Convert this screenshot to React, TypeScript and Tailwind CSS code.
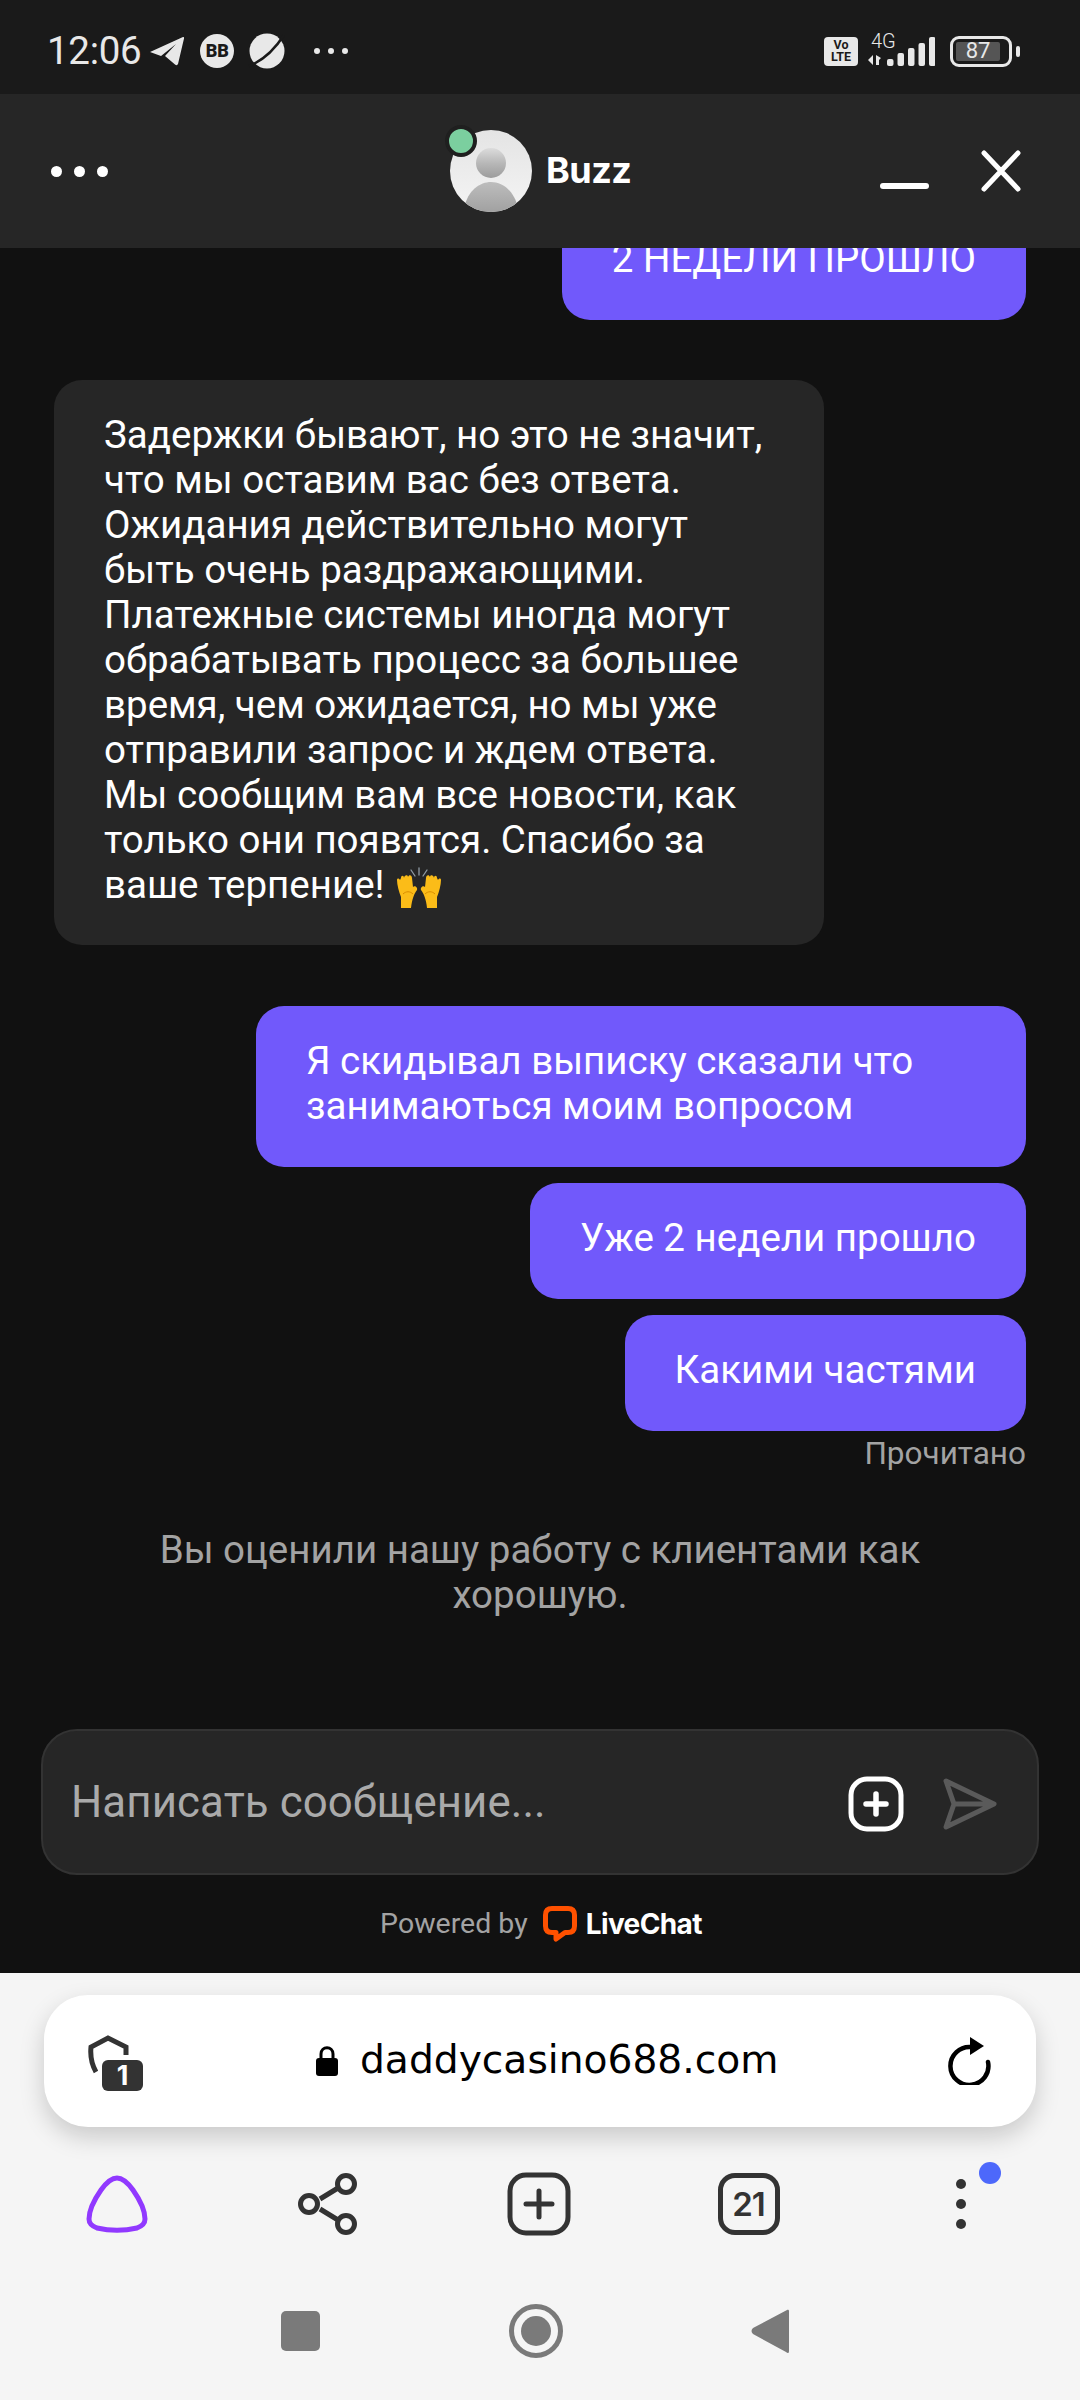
import React from "react";

function Telegram() {
  return (
    <svg width="36" height="30" viewBox="0 0 36 30" className="ml-[8px]">
      <path d="M1 16 L34 1 Q35.500 .5 35 2.500 L29 28 Q28 30 26 28.500 L16 20 L27 8 L12 20 Z" fill="#e8e8e8" />
    </svg>
  );
}

function Planet() {
  return (
    <svg width="38" height="38" viewBox="0 0 38 38">
      <circle cx="19" cy="19" r="17.500" fill="#e8e8e8" />
      <path d="M1 34 C14 29 27 17 36 3" stroke="#1a1a1a" strokeWidth="2.500" fill="none" />
    </svg>
  );
}

function Signal() {
  const bars = [7, 13, 18, 23, 29];
  return (
    <svg width="68" height="32" viewBox="0 0 68 32">
      <path d="M1 25 L6 20 V30 Z M9 20 L14 23 L12 25 V30 H9 Z" fill="#e8e8e8" />
      {bars.map((h, i) => (
        <rect key={i} x={20 + i * 10.500} y={31 - h} width="6.500" height={h} rx="2" fill="#e8e8e8" />
      ))}
    </svg>
  );
}

function Avatar() {
  return (
    <div className="relative w-[82px] h-[82px]">
      <svg width="82" height="82" viewBox="0 0 82 82">
        <defs>
          <linearGradient id="avatarBg" x1="0" y1="0" x2="0" y2="1">
            <stop offset="0" stopColor="#e4e4e4" />
            <stop offset="1" stopColor="#f4f4f4" />
          </linearGradient>
          <linearGradient id="head" x1="0" y1="0" x2="0" y2="1">
            <stop offset="0" stopColor="#dcdcdc" />
            <stop offset=".5" stopColor="#b8b8b8" />
            <stop offset="1" stopColor="#9c9c9c" />
          </linearGradient>
          <linearGradient id="body" x1="0" y1="0" x2="0" y2="1">
            <stop offset="0" stopColor="#bdbdbd" />
            <stop offset="1" stopColor="#9f9f9f" />
          </linearGradient>
          <clipPath id="avatarClip">
            <circle cx="41" cy="41" r="41" />
          </clipPath>
        </defs>
        <circle cx="41" cy="41" r="41" fill="url(#avatarBg)" />
        <g clipPath="url(#avatarClip)">
          <circle cx="41" cy="33" r="15" fill="url(#head)" />
          <path d="M14 78 C18 60 30 52 41 52 C52 52 64 60 68 78 V84 H14 Z" fill="url(#body)" />
        </g>
      </svg>
      <div className="absolute left-[-5px] top-[-5px] w-[24px] h-[24px] rounded-full bg-[#7bcf9f] box-content border-[4px] border-[#1f1f1f]" />
    </div>
  );
}

function Hands() {
  return (
    <svg width="46" height="44" viewBox="0 0 46 44" className="inline-block align-[-7px] -my-[6px] ml-[2px]">
      <g stroke="#8f9aa3" strokeWidth="1.300" strokeLinecap="round">
        <path d="M23 1 V8" />
        <path d="M15 3 L19 9" />
        <path d="M31 3 L27 9" />
      </g>
      <path d="M5 41 V30 C3 25 1 18 1 13 C1 11 3 11 4 13 L5 11 C5 8 8 8 8 11 C8 8 12 7 12 10 C13 7 16 8 16 11 L17 20 C19 18 22 21 21 23 C18 27 16 32 15 41 Z" fill="#fbbc18" />
      <path d="M41 41 V30 C43 25 45 18 45 13 C45 11 43 11 42 13 L41 11 C41 8 38 8 38 11 C38 8 34 7 34 10 C33 7 30 8 30 11 L29 20 C27 18 24 21 25 23 C28 27 30 32 31 41 Z" fill="#fbbc18" />
      <path d="M7 27 C10 24 14 24 17 27 M39 27 C36 24 32 24 29 27" stroke="#d98c00" strokeWidth="1" fill="none" />
    </svg>
  );
}

function UserBubble({ children, className }: { children: React.ReactNode; className?: string }) {
  return (
    <div className={`self-end bg-[#7159fb] text-white rounded-[28px] px-[50px] pt-[32px] pb-[39px] text-[38.500px] leading-[45px] ${className ?? ""}`}>
      {children}
    </div>
  );
}

export default function App() {
  return (
    <div className="w-[1080px] h-[2400px] flex flex-col overflow-hidden bg-[#111111]" style={{ fontFamily: "Roboto, sans-serif" }}>
      {/* status bar */}
      <div className="relative z-10 h-[94px] shrink-0 bg-[#1a1a1a] flex items-center justify-between pt-[8px] pl-[47px] pr-[60px] text-[#e8e8e8]">
        <div className="flex items-center">
          <span className="text-[38.500px] leading-none font-normal tracking-[-0.3px]">12:06</span>
          <Telegram />
          <div className="ml-[15px] w-[34px] h-[34px] rounded-full bg-[#e8e8e8] flex items-center justify-center text-[#1a1a1a] text-[18px] font-black leading-none">BB</div>
          <div className="ml-[14px]"><Planet /></div>
          <div className="ml-[28px] flex gap-[8px]">
            <div className="w-[6px] h-[6px] rounded-full bg-[#e8e8e8]" />
            <div className="w-[6px] h-[6px] rounded-full bg-[#e8e8e8]" />
            <div className="w-[6px] h-[6px] rounded-full bg-[#e8e8e8]" />
          </div>
        </div>
        <div className="flex items-center">
          <div className="w-[34px] h-[29px] rounded-[4px] bg-[#e8e8e8] flex flex-col items-center justify-center text-[#1a1a1a] text-[12.500px] leading-[12px] font-bold">
            <span>Vo</span>
            <span>LTE</span>
          </div>
          <div className="relative ml-[9px] w-[68px] h-[32px]">
            <Signal />
            <span className="absolute left-[4px] top-[-3px] text-[20px] leading-[18px] font-light text-[#e8e8e8]">4G</span>
          </div>
          <div className="ml-[15px] w-[62px] h-[31px] rounded-[9px] border-[3px] border-[#e8e8e8] p-[3px] flex">
            <div className="w-[44px] h-[19px] rounded-[2px] bg-[#555555] flex items-center justify-center text-[22px] leading-none text-[#e8e8e8]">87</div>
          </div>
          <div className="ml-[4px] w-[4px] h-[11px] rounded-full bg-[#e8e8e8]" />
        </div>
      </div>

      {/* chat header */}
      <div className="relative z-10 h-[154px] shrink-0 bg-[#262626] flex items-center">
        <div className="ml-[51px] flex gap-[12px]">
          <div className="w-[11px] h-[11px] rounded-full bg-white" />
          <div className="w-[11px] h-[11px] rounded-full bg-white" />
          <div className="w-[11px] h-[11px] rounded-full bg-white" />
        </div>
        <div className="ml-[342px] flex items-center gap-[14px]">
          <Avatar />
          <span className="text-white text-[36px] font-bold leading-none tracking-[-0.5px] -mt-[2px]" style={{ fontFamily: "Inter, sans-serif" }}>Buzz</span>
        </div>
        <div className="ml-[249px] mt-[30px] w-[49px] h-[6px] rounded-full bg-white" />
        <svg width="44" height="44" viewBox="0 0 44 44" className="ml-[50px]">
          <path d="M5 4 L39 40 M39 4 L5 40" stroke="#ffffff" strokeWidth="5" strokeLinecap="round" />
        </svg>
      </div>

      {/* chat */}
      <div className="flex-1 min-h-0 flex flex-col">
        <div className="flex-1 min-h-0 overflow-hidden flex flex-col justify-end px-[54px]">
          <UserBubble className="shrink-0">2 НЕДЕЛИ ПРОШЛО</UserBubble>

          <div className="shrink-0 mt-[60px] w-[770px] bg-[#262626] text-white rounded-[28px] px-[50px] pt-[32px] pb-[38px] text-[38.500px] leading-[45px]">
            Задержки бывают, но это не значит,<br />
            что мы оставим вас без ответа.<br />
            Ожидания действительно могут<br />
            быть очень раздражающими.<br />
            Платежные системы иногда могут<br />
            обрабатывать процесс за большее<br />
            время, чем ожидается, но мы уже<br />
            отправили запрос и ждем ответа.<br />
            Мы сообщим вам все новости, как<br />
            только они появятся. Спасибо за<br />
            ваше терпение! <Hands />
          </div>

          <UserBubble className="shrink-0 mt-[61px] w-[770px] pb-[38px]">
            Я скидывал выписку сказали что<br />
            занимаються моим вопросом
          </UserBubble>
          <UserBubble className="shrink-0 mt-[16px]">Уже 2 недели прошло</UserBubble>
          <UserBubble className="shrink-0 mt-[16px]">Какими частями</UserBubble>

          <div className="shrink-0 self-end mt-[5px] text-[#a3a3a3] text-[31.500px] leading-[36px]">Прочитано</div>

          <div className="shrink-0 mt-[55px] mb-[112px] text-center text-[#a3a3a3] text-[38.500px] leading-[45px]">
            Вы оценили нашу работу с клиентами как<br />
            хорошую.
          </div>
        </div>

        {/* composer */}
        <div className="shrink-0 mx-[41px] h-[146px] rounded-[36px] bg-[#262626] border-[2px] border-[#333333] flex items-center pl-[28px]">
          <span className="text-[#aaaaaa] text-[43.800px] leading-none tracking-[0.1px] mt-[2px]">Написать сообщение...</span>
          <svg width="56" height="56" viewBox="0 0 56 56" className="ml-[302px] mt-[3px]">
            <rect x="3" y="3" width="50" height="50" rx="16" fill="none" stroke="#ffffff" strokeWidth="5" />
            <path d="M28 18 V38 M18 28 H38" stroke="#ffffff" strokeWidth="5.500" strokeLinecap="round" />
          </svg>
          <svg width="54" height="52" viewBox="0 0 54 52" className="ml-[39px] mt-[3px]">
            <path d="M3 3 L51 26 L3 49 L11 26 Z M11 26 H51" fill="none" stroke="#5a5a5a" strokeWidth="5" strokeLinejoin="round" />
          </svg>
        </div>

        {/* powered by */}
        <div className="shrink-0 h-[98px] flex items-center justify-center pl-[2px]">
          <span className="text-[#a3a3a3] text-[28.500px] leading-none">Powered by</span>
          <svg width="34" height="36" viewBox="0 0 34 36" className="ml-[15px]">
            <path d="M9 2.500 H25 Q31.500 2.500 31.500 9 V20 Q31.500 26.500 25 26.500 H22 L13 33 V26.500 H9 Q2.500 26.500 2.500 20 V9 Q2.500 2.500 9 2.500 Z" fill="none" stroke="#ff5100" strokeWidth="5" strokeLinejoin="round" />
          </svg>
          <span className="ml-[9px] text-white text-[28px] leading-none font-bold tracking-[-0.6px]" style={{ fontFamily: "Inter, sans-serif" }}>LiveChat</span>
        </div>
      </div>

      {/* browser chrome */}
      <div className="shrink-0 h-[427px] bg-[#f5f5f5] flex flex-col">
        <div className="mt-[22px] mx-[44px] h-[132px] rounded-[44px] bg-white shadow-[0_10px_24px_rgba(0,0,0,0.18)] flex items-center pl-[44px] pr-[44px]">
          <div className="relative w-[56px] h-[58px] mt-[6px]">
            <svg width="42" height="44" viewBox="0 0 42 44" className="absolute left-0 top-0">
              <path d="M38 20 V12 L20 3 L3 12 C2 22 4 30 8 37" fill="none" stroke="#333333" strokeWidth="5" />
            </svg>
            <div className="absolute left-[14px] top-[25px] w-[41px] h-[31px] rounded-[6px] bg-[#333333] flex items-center justify-center text-white text-[27px] leading-none font-bold" style={{ fontFamily: "Inter, sans-serif" }}>1</div>
          </div>
          <svg width="22" height="30" viewBox="0 0 22 30" className="ml-[172px]">
            <path d="M5 13 V8 C5 -0.500 17 -0.500 17 8 V13" fill="none" stroke="#000000" strokeWidth="3" />
            <rect x="0" y="12" width="22" height="18" rx="3" fill="#000000" />
          </svg>
          <span className="ml-[22px] text-black text-[39.200px] leading-none -mt-[2px]" style={{ fontFamily: "'DejaVu Sans', sans-serif" }}>daddycasino688.com</span>
          <svg width="44" height="48" viewBox="0 0 44 48" className="ml-auto">
            <path d="M23 10 A19 19 0 1 0 40 25" fill="none" stroke="#000000" strokeWidth="4.500" strokeLinecap="round" />
            <path d="M22 0 L36 9 L22 18 Z" fill="#000000" />
          </svg>
        </div>

        <div className="mt-[45px] ml-[11px] grid grid-cols-5 w-[1055px] items-center justify-items-center">
          <svg width="62" height="58" viewBox="0 0 62 58">
            <path d="M31 3 C26 3 20 8 15 15 C8 25 3 35 3 44 C3 49 6 51 11 53 C24 56 38 56 51 53 C56 51 59 49 59 44 C59 35 54 25 47 15 C42 8 36 3 31 3 Z" fill="none" stroke="#9139ff" strokeWidth="5" />
          </svg>
          <svg width="60" height="62" viewBox="0 0 60 62">
            <path d="M22 26 L40 15 M22 36 L40 47" stroke="#333333" strokeWidth="5" />
            <circle cx="48" cy="11" r="8.500" fill="none" stroke="#333333" strokeWidth="5" />
            <circle cx="11" cy="31" r="8.500" fill="none" stroke="#333333" strokeWidth="5" />
            <circle cx="48" cy="51" r="8.500" fill="none" stroke="#333333" strokeWidth="5" />
          </svg>
          <svg width="64" height="64" viewBox="0 0 64 64">
            <rect x="3" y="3" width="58" height="58" rx="16" fill="none" stroke="#333333" strokeWidth="5" />
            <path d="M32 19 V45 M19 32 H45" stroke="#333333" strokeWidth="5" strokeLinecap="round" />
          </svg>
          <div className="w-[62px] h-[62px] -ml-[2px] rounded-[17px] border-[5px] border-[#333333] flex items-center justify-center text-[#333333] text-[33px] leading-none font-semibold tracking-[-1px]" style={{ fontFamily: "Inter, sans-serif" }}>21</div>
          <div className="relative w-[10px] h-[50px] flex flex-col justify-between items-center">
            <div className="w-[10px] h-[10px] rounded-full bg-[#333333]" />
            <div className="w-[10px] h-[10px] rounded-full bg-[#333333]" />
            <div className="w-[10px] h-[10px] rounded-full bg-[#333333]" />
            <div className="absolute left-[23px] top-[-17px] w-[22px] h-[22px] rounded-full bg-[#4d68fb]" />
          </div>
        </div>

        <div className="mt-[68px] ml-[281px] flex items-center">
          <div className="w-[39px] h-[40px] rounded-[5px] bg-[#7a7a7a]" />
          <div className="ml-[189px] w-[54px] h-[54px] rounded-full border-[5px] border-[#7a7a7a] flex items-center justify-center">
            <div className="w-[30px] h-[30px] rounded-full bg-[#7a7a7a]" />
          </div>
          <svg width="38" height="46" viewBox="0 0 38 46" className="ml-[188px]">
            <path d="M36 2 C37 1.500 38 2 38 3 V43 C38 45 37 46 35 44 L2 26 C0 24 0 22 2 20 Z" fill="#7a7a7a" />
          </svg>
        </div>
      </div>
    </div>
  );
}
